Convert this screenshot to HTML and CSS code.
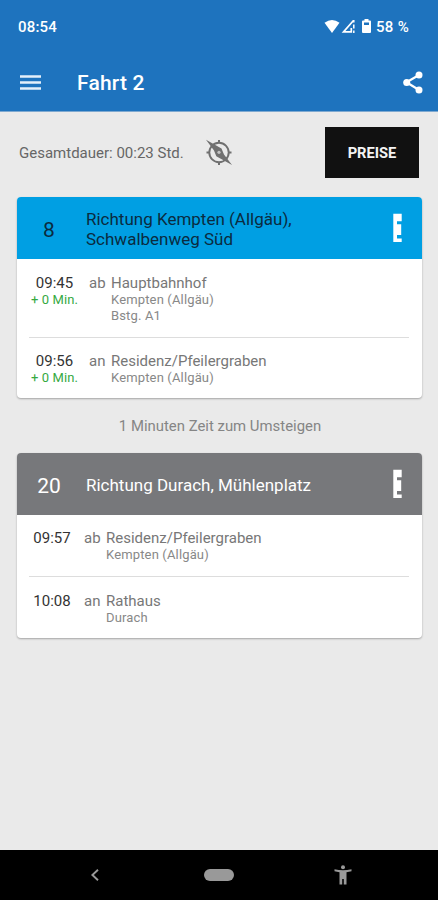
FILE: index.html
```html
<!DOCTYPE html>
<html lang="de">
<head>
<meta charset="utf-8">
<title>Fahrt 2</title>
<link rel="stylesheet" href="styles.css">
</head>
<body>
<header class="top">
  <div class="status">
    <span class="clock">08:54</span>
    <svg class="status-icons" width="49" height="16" viewBox="0 0 49 16" fill="#fff">
      <path d="M0.500 3.800Q8 -1.600 15.500 3.800L8 14Z"/>
      <path d="M29.800 1V3.600M29.800 5.400V9.500" stroke="#fff" stroke-width="1.500"/>
      <path d="M29.500 1.500L19.500 12.900H27.300V9" fill="none" stroke="#fff" stroke-width="1.700"/>
      <path d="M29.800 11.500V14" stroke="#fff" stroke-width="1.500"/>
      <path fill-rule="evenodd" d="M40.500 0H44.500V1.500H46Q47 1.500 47 2.500V13Q47 14 46 14H39Q38 14 38 13V2.500Q38 1.500 39 1.500H40.500ZM40 3.500V6H45V3.500Z"/>
    </svg>
    <span class="battery">58 %</span>
  </div>
  <div class="bar">
    <svg width="21" height="16" viewBox="0 0 21 16"><path d="M0 1.500H21M0 7.500H21M0 13.500H21" stroke="#e4effa" stroke-width="2.500"/></svg>
    <h1 class="title">Fahrt 2</h1>
    <svg width="20" height="23" viewBox="0 0 20 23" fill="#fff"><path d="M16 4L3.500 11.300L16 19" fill="none" stroke="#fff" stroke-width="2.200"/><circle cx="16" cy="4" r="3.500"/><circle cx="3.700" cy="11.400" r="3.500"/><circle cx="16" cy="19" r="3.500"/></svg>
  </div>
</header>
<main class="content">
  <div class="summary">
    <span class="duration">Gesamtdauer: 00:23 Std.</span>
    <svg class="locate" width="27" height="28" viewBox="0 0 27 28">
      <circle cx="14" cy="13.500" r="9.700" fill="none" stroke="#707070" stroke-width="1.900"/>
      <path d="M14 1V4M14 23V26M1.500 13.500H5M23 13.500H26.500" stroke="#707070" stroke-width="2"/>
      <path d="M1 0.800L16.500 9.600L19 15.500L27 26L11.300 17.200L9 11.500Z" fill="#707070"/>
      <circle cx="14" cy="13.300" r="1.600" fill="#c4c4c4"/>
    </svg>
    <button class="prices">PREISE</button>
  </div>

  <section class="card">
    <div class="head head-blue">
      <span class="line">8</span>
      <span class="direction">Richtung Kempten (Allgäu),<br>Schwalbenweg Süd</span>
      <svg class="more" width="9" height="30" viewBox="0 0 9 30"><path d="M0.300 0.700H8.700V8.300H4V11.300H8.200V22H4V25.500H8.700V29H0.300Z" fill="#fff"/></svg>
    </div>
    <div class="stop stop-first">
      <div class="when"><div class="time">09:45</div><div class="delay">+ 0 Min.</div></div>
      <div class="kind">ab</div>
      <div class="place"><div class="name">Hauptbahnhof</div><div class="detail">Kempten (Allgäu)</div><div class="detail">Bstg. A1</div></div>
    </div>
    <div class="stop stop-last">
      <div class="when"><div class="time">09:56</div><div class="delay">+ 0 Min.</div></div>
      <div class="kind">an</div>
      <div class="place"><div class="name">Residenz/Pfeilergraben</div><div class="detail">Kempten (Allgäu)</div></div>
    </div>
  </section>

  <p class="transfer">1 Minuten Zeit zum Umsteigen</p>

  <section class="card card-second">
    <div class="head head-grey">
      <span class="line">20</span>
      <span class="direction">Richtung Durach, Mühlenplatz</span>
      <svg class="more" width="9" height="30" viewBox="0 0 9 30"><path d="M0.300 0.700H8.700V8.300H4V11.300H8.200V22H4V25.500H8.700V29H0.300Z" fill="#fff"/></svg>
    </div>
    <div class="stop stop-first">
      <div class="when"><div class="time">09:57</div></div>
      <div class="kind">ab</div>
      <div class="place"><div class="name">Residenz/Pfeilergraben</div><div class="detail">Kempten (Allgäu)</div></div>
    </div>
    <div class="stop stop-last">
      <div class="when"><div class="time">10:08</div></div>
      <div class="kind">an</div>
      <div class="place"><div class="name">Rathaus</div><div class="detail">Durach</div></div>
    </div>
  </section>
</main>
<nav class="nav">
  <svg width="10" height="14" viewBox="0 0 10 14"><path d="M8 1.800L2.400 7L8 12.200" fill="none" stroke="#999" stroke-width="1.900"/></svg>
  <span class="home"></span>
  <svg width="18" height="20" viewBox="0 0 18 20" fill="#999"><circle cx="9" cy="2.200" r="2"/><path d="M0.500 4.200Q9 6.400 17.500 4.200V6.300L12.500 7.200V19.500H9.800V14H8.200V19.500H5.500V7.200L0.500 6.300Z"/></svg>
</nav>
</body>
</html>
```
FILE: styles.css
```css
* { box-sizing: border-box; }
body {
  margin: 0;
  width: 438px;
  height: 900px;
  display: flex;
  flex-direction: column;
  overflow: hidden;
  background: #eaeaea;
  font-family: Roboto, "Liberation Sans", sans-serif;
}
svg { display: block; flex: none; }
.top {
  height: 112px;
  flex: none;
  background: #1e73be;
  border-bottom: 1px solid #7fa9d0;
  color: #fff;
}
.status {
  height: 54px;
  display: flex;
  align-items: center;
  padding: 0 29px 0 18px;
  font-size: 15px;
  font-weight: 500;
}
.clock { flex: 1; letter-spacing: 0.2px; }
.status-icons { margin-right: 3px; }
.battery { width: 33px; white-space: nowrap; letter-spacing: 0.3px; }
.bar {
  height: 57px;
  display: flex;
  align-items: center;
  padding: 0 15px 0 20px;
}
.title {
  flex: 1;
  margin: 0 0 0 36px;
  font-size: 21px;
  font-weight: 500;
  letter-spacing: 0.2px;
}
.content { flex: 1; padding: 15px 16px 0 17px; }
.summary { height: 51px; display: flex; align-items: center; padding: 0 3px 0 2px; }
.duration { width: 186px; font-size: 15px; color: #666; white-space: nowrap; }
.prices {
  width: 94px;
  height: 51px;
  margin-left: auto;
  border: 0;
  padding: 0;
  background: #111;
  color: #f4f4f4;
  font: 700 14.700px Roboto, sans-serif;
}
.card {
  margin-top: 19px;
  height: 201px;
  background: #fff;
  border-radius: 4px;
  box-shadow: 0 1px 2px rgba(0, 0, 0, .3);
  overflow: hidden;
}
.head { height: 62px; display: flex; align-items: center; }
.head-blue { background: #009fe3; color: #0b2b40; }
.head-grey { background: #77787b; color: #fff; }
.line { width: 69px; padding: 3px 5px 0 0; text-align: center; font-size: 21px; }
.direction { flex: 1; padding-top: 2px; font-size: 17px; line-height: 20px; }
.more { margin-right: 20px; }
.stop { display: flex; margin: 0 13px 0 12px; font-size: 15px; line-height: 17px; color: #777; }
.stop-first { height: 79px; padding-top: 16px; border-bottom: 1px solid #ddd; }
.stop-last { padding-top: 15px; }
.when { width: 60px; text-align: center; padding-right: 9px; }
.time { color: #333; }
.delay { font-size: 13px; line-height: 16px; color: #36a93f; white-space: nowrap; letter-spacing: 0.1px; }
.kind { width: 22px; }
.detail { font-size: 13px; line-height: 16px; color: #888; letter-spacing: 0.150px; }
.transfer {
  margin: 19px 0 0 1px;
  font-size: 14.900px;
  line-height: 19px;
  text-align: center;
  color: #858585;
}
.card-second { margin-top: 17px; height: 185px; }
.card-second .when { width: 55px; }
.card-second .stop-first { height: 62px; padding-top: 15px; }
.card-second .stop-last { padding-top: 16px; }
.nav {
  height: 50px;
  flex: none;
  display: flex;
  align-items: center;
  justify-content: space-between;
  padding: 0 86px 0 90px;
  background: #000;
}
.home { width: 30px; height: 12px; margin-left: 4px; border-radius: 6px; background: #999; }
```
